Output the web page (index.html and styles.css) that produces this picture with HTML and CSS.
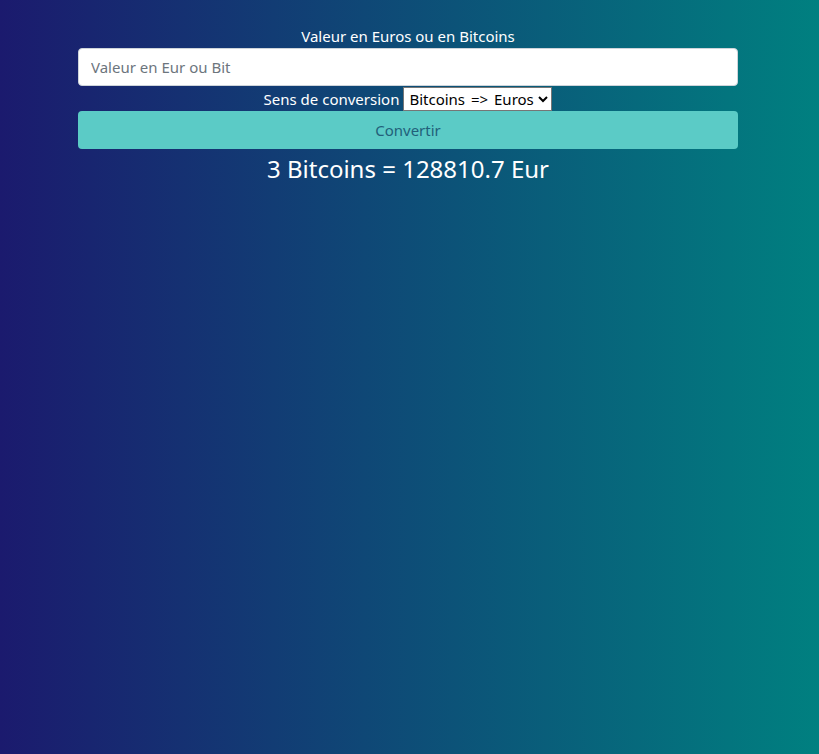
FILE: index.html
```html
<!DOCTYPE html>
<html lang="fr">
<head>
<meta charset="utf-8">
<title>Convertisseur</title>
<link rel="stylesheet" href="styles.css">
</head>
<body>
<div class="page">
  <form class="conv">
    <label class="lbl" for="val">Valeur en Euros ou en Bitcoins</label>
    <input id="val" class="field" type="text" placeholder="Valeur en Eur ou Bit">
    <div class="sens">
      <span>Sens de conversion</span>
      <select class="sel">
        <option>Bitcoins =&gt; Euros</option>
        <option>Euros =&gt; Bitcoins</option>
      </select>
    </div>
    <button type="button" class="btn">Convertir</button>
    <div class="result">3 Bitcoins = 128810.7 Eur</div>
  </form>
</div>
</body>
</html>
```
FILE: styles.css
```css
html, body {
  margin: 0;
  height: 100%;
}
body {
  background: linear-gradient(to right, #1b1a6e, #008080);
  font-family: "Noto Sans", "Open Sans", sans-serif;
  font-size: 15px;
  color: #fff;
}
.page {
  padding-top: 24px;
}
.conv {
  width: 660px;
  margin-left: 78px;
  display: flex;
  flex-direction: column;
  align-items: center;
}
.lbl {
  line-height: 24px;
  text-align: center;
}
.field {
  box-sizing: border-box;
  width: 100%;
  height: 38px;
  border: 1px solid #ced4da;
  border-radius: 4px;
  padding: 0 12px;
  font-family: inherit;
  font-size: 15px;
  color: #495057;
  background: #fff;
  outline: none;
}
.field::placeholder {
  color: #6c757d;
}
.sens {
  display: flex;
  align-items: center;
  gap: 4px;
  height: 25px;
  line-height: 24px;
  font-size: 15px;
}
.sel {
  height: 24px;
  font-family: inherit;
  font-size: 15px;
  word-spacing: 2px;
  color: #000;
  background: #fff;
  border: 1px solid #767676;
  border-radius: 0;
  padding: 0 1px;
}
.btn {
  box-sizing: border-box;
  width: 100%;
  height: 38px;
  border: none;
  border-radius: 4px;
  background: #5bcbc6;
  color: #22607a;
  font-family: inherit;
  font-size: 15px;
  cursor: pointer;
}
.result {
  margin-top: 5px;
  font-size: 24px;
  line-height: 29px;
  text-align: center;
}
```
